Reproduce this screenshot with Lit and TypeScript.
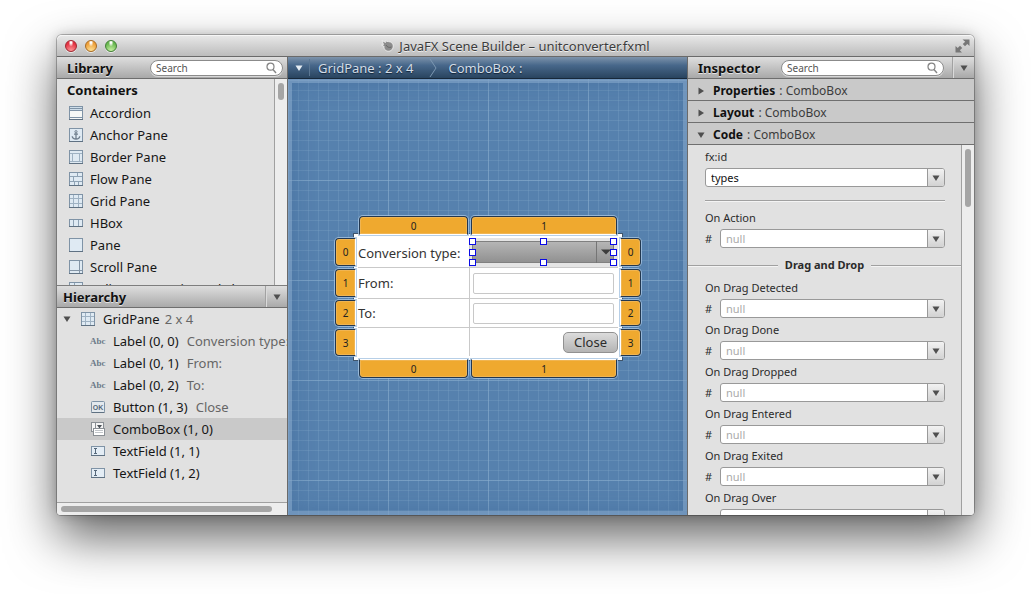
import { LitElement, html, svg, css } from "lit";
import { customElement, property } from "lit/decorators.js";

const frame = svg`<rect x="0.5" y="0.5" width="13" height="13" fill="#dfeaf3" stroke="#7f93a6"/><path d="M0 13.5H14" stroke="#5f7182"/>`;

const glyphs: Record<string, unknown> = {
  accordion: svg`<rect x="0.5" y="0.5" width="13" height="13" fill="#f6f8f6" stroke="#7f93a6"/><rect x="1" y="1" width="12" height="4" fill="#cfdeea"/><path d="M1 2.5H13M1 4.5H13M1 11.5H13" stroke="#7f93a6"/><path d="M0 13.5H14" stroke="#5f7182"/>`,
  anchor: svg`${frame}<circle cx="7" cy="3.7" r="1.1" fill="none" stroke="#71808f"/><path d="M7 5V11.2M5 6.2H9M3.2 8.2C3.4 10 5 11 7 11.2C9 11 10.6 10 10.8 8.2" fill="none" stroke="#71808f" stroke-width="1.3"/>`,
  border: svg`${frame}<path d="M1 3.5H13M1 11.5H13M3.5 3.5V11.5M10.5 3.5V11.5" stroke="#9fb2c3"/>`,
  flow: svg`${frame}<path d="M1 4.5H13M1 9.5H13M8.5 1V4.5M4.5 4.5V9.5M9.5 9.5V13M5.5 9.5V13" stroke="#8fa3b5"/>`,
  grid: svg`${frame}<path d="M1 4.5H13M1 9.5H13M4.5 1V13M9.5 1V13" stroke="#9fb2c3"/>`,
  hbox: svg`<rect x="0.5" y="3.5" width="13" height="7" fill="#dfeaf3" stroke="#7f93a6"/><path d="M0 10.5H14" stroke="#5f7182"/><path d="M4.5 4V10M9.5 4V10" stroke="#8fa3b5"/>`,
  pane: frame,
  scroll: svg`${frame}<path d="M10.5 1V13M1 10.5H13" stroke="#8495a6"/>`,
  split: svg`${frame}<path d="M5.5 1V13M1 4.5H13" stroke="#8fa3b5"/>`,
  label: svg`<text x="-1" y="10" font-family="Liberation Serif, serif" font-size="9" font-weight="bold" fill="#6b7a89">Abc</text>`,
  button: svg`<rect x="0.5" y="1.5" width="13" height="11" rx="1" fill="#e3e9ee" stroke="#7f93a6"/><path d="M0.5 12.5H13.5" stroke="#5f7182"/><text x="7" y="9.7" text-anchor="middle" font-family="Liberation Sans, sans-serif" font-size="7" font-weight="bold" fill="#56687a">OK</text>`,
  combo: svg`<rect x="0.5" y="0.5" width="12" height="9" fill="#f4f4f4" stroke="#8a8f94"/><path d="M4.5 1V9" stroke="#8a8f94"/><path d="M6 3H11L8.5 6.5Z" fill="#4c5259"/><rect x="2.5" y="6.5" width="11" height="7" fill="#fff" stroke="#8a8f94"/><path d="M4 8.5H12M4 10.5H12" stroke="#c2c6ca"/>`,
  field: svg`<rect x="0.5" y="2.5" width="13" height="9" fill="#e4edf5" stroke="#7f93a6"/><path d="M0 11.5H14" stroke="#5f7182"/><path d="M3 4.5H6M3 9.5H6M4.5 4.5V9.5" stroke="#56687a"/>`,
};

const icon = (name: string) =>
  html`<svg class="icon" width="14" height="14" viewBox="0 0 14 14" overflow="visible" aria-hidden="true">${glyphs[name]}</svg>`;

const arrow = (dir: "down" | "right" = "down", color = "#4f4f4f") => html`
  <svg class="arrow" width="8" height="8" viewBox="0 0 8 8" aria-hidden="true">
    <path d=${dir === "down" ? "M0.5 1.5H7.5L4 7Z" : "M1.5 0.5V7.5L7 4Z"} fill=${color} />
  </svg>`;

const base = css`
  * { box-sizing: border-box; }
  button, input, select {
    font: inherit;
    color: inherit;
    margin: 0;
    padding: 0;
    border: 0;
    border-radius: 0;
    background: none;
    outline: none;
    appearance: none;
    min-width: 0;
  }
  ul { list-style: none; margin: 0; padding: 0; }
  svg { display: block; flex: none; }
`;

const header = css`
  .header {
    flex: none;
    display: flex;
    align-items: center;
    height: 22px;
    padding-left: 10px;
    background: linear-gradient(#dedede, #a9a9a9);
    border-bottom: 1px solid #6e6e6e;
  }
  .header h2 {
    flex: 0 0 83px;
    margin: 0;
    font-size: 13px;
    line-height: 18px;
    color: #111;
    text-shadow: 0 1px 0 #e4e4e4;
  }
  .menu {
    flex: none;
    display: grid;
    place-items: center;
    width: 22px;
    height: 100%;
    border-left: 1px solid #a2a2a2;
    box-shadow: inset 1px 0 0 #dadada;
  }
`;

const scroll = css`
  .vbar, .hbar {
    flex: none;
    display: flex;
    background: #ededed;
  }
  .vbar { width: 13px; padding: 4px 3px; border-left: 1px solid #a0a0a0; }
  .hbar { height: 13px; padding: 3px 4px; border-top: 1px solid #a0a0a0; }
  .thumb { border-radius: 3px; background: #a5a5a5; }
`;

@customElement("search-box")
class SearchBox extends LitElement {
  @property() label = "";
  static styles = [base, css`
    :host { flex: 1; min-width: 0; }
    .pill {
      display: flex;
      align-items: center;
      height: 16px;
      padding: 0 5px;
      border: 1px solid #8b8b8b;
      border-radius: 8px;
      background: #fff;
      box-shadow: 0 1px 0 #d8d8d8;
    }
    input { flex: 1; font-size: 10px; line-height: 14px; color: #333; }
    input::placeholder { color: #555; opacity: 1; }
  `];
  render() {
    return html`<div class="pill">
      <input type="text" placeholder="Search" aria-label=${this.label} />
      <svg width="11" height="12" viewBox="0 0 11 12" aria-hidden="true">
        <circle cx="4.5" cy="4.7" r="3.5" fill="none" stroke="#858585" stroke-width="1.2" />
        <path d="M7 7.5L10 11" stroke="#858585" stroke-width="1.4" />
      </svg>
    </div>`;
  }
}

@customElement("side-panel")
class SidePanel extends LitElement {
  static styles = [base, header, scroll, css`
    :host { display: flex; flex-direction: column; min-height: 0; background: #e1e1e1; }
    search-box { margin-right: 4px; }
    .library { flex: none; height: 207px; display: flex; border-bottom: 1px solid #7e7e7e; }
    .items { flex: 1; overflow: hidden; }
    .items h3 { margin: 0; padding: 0 0 1px 10px; font-size: 13px; line-height: 22px; color: #111; }
    li { display: flex; align-items: center; height: 22px; white-space: nowrap; color: #161616; }
    .items li { padding-left: 12px; gap: 7px; }
    .vbar .thumb { width: 6px; height: 17px; }
    .header.tree { padding-left: 6px; }
    .tree h2 { flex: 1; }
    .nodes { flex: 1; min-height: 0; overflow: hidden; }
    .nodes li { gap: 8px; padding-left: 34px; }
    .nodes li.root { padding-left: 6px; }
    .root .arrow { margin-right: 2px; }
    .nodes li.selected { background: #c9c9c9; }
    .detail { color: #666; margin-left: 8px; }
    .root .detail { margin-left: 5px; }
    .hbar .thumb { width: 211px; height: 6px; }
  `];
  private library = [
    ["accordion", "Accordion"], ["anchor", "Anchor Pane"], ["border", "Border Pane"],
    ["flow", "Flow Pane"], ["grid", "Grid Pane"], ["hbox", "HBox"], ["pane", "Pane"],
    ["scroll", "Scroll Pane"], ["split", "Split Pane (Horizontal Flow)"],
  ];
  private nodes = [
    ["label", "Label (0, 0)", "Conversion type:"], ["label", "Label (0, 1)", "From:"],
    ["label", "Label (0, 2)", "To:"], ["button", "Button (1, 3)", "Close"],
    ["combo", "ComboBox (1, 0)", ""], ["field", "TextField (1, 1)", ""], ["field", "TextField (1, 2)", ""],
  ];
  render() {
    return html`
      <div class="header"><h2>Library</h2><search-box label="Search library"></search-box></div>
      <div class="library">
        <div class="items">
          <h3>Containers</h3>
          <ul>${this.library.map(([i, n]) => html`<li>${icon(i)}<span>${n}</span></li>`)}</ul>
        </div>
        <div class="vbar"><div class="thumb"></div></div>
      </div>
      <div class="header tree"><h2>Hierarchy</h2><button class="menu" aria-label="Hierarchy menu">${arrow()}</button></div>
      <ul class="nodes">
        <li class="root">${arrow()}${icon("grid")}<span>GridPane<span class="detail">2 x 4</span></span></li>
        ${this.nodes.map(([i, n, d]) => html`<li class=${i === "combo" ? "selected" : ""}>${icon(i)}<span>${n}<span class="detail">${d}</span></span></li>`)}
      </ul>
      <div class="hbar"><div class="thumb"></div></div>`;
  }
}

@customElement("design-canvas")
class DesignCanvas extends LitElement {
  static styles = [base, css`
    :host { display: flex; flex-direction: column; min-width: 0; }
    .crumbs {
      flex: none;
      display: flex;
      align-items: center;
      height: 22px;
      color: #d3dde7;
      background: linear-gradient(#7d93ab, #47678a 40%, #29445f);
      border-bottom: 1px solid #17283a;
      text-shadow: 0 1px 1px #13253a;
      white-space: nowrap;
    }
    .crumbs .menu { width: 22px; height: 17px; display: grid; place-items: center; border-right: 1px solid #5b7793; }
    .crumbs a { color: inherit; text-decoration: none; padding: 0 8px; }
    .chevron { margin: 0 3px 0 8px; }
    .canvas {
      flex: 1;
      min-height: 0;
      padding-left: 1px;
      display: grid;
      place-content: center;
      overflow: hidden;
      box-shadow: inset 0 0 0 4px rgba(135, 169, 204, .6), inset 0 0 24px rgba(50, 90, 140, .4);
      background-color: #5681ae;
      background-image:
        linear-gradient(90deg, rgba(143, 178, 209, .45) 1px, transparent 1px),
        linear-gradient(rgba(143, 178, 209, .45) 1px, transparent 1px),
        linear-gradient(90deg, rgba(143, 178, 209, .22) 1px, transparent 1px),
        linear-gradient(rgba(143, 178, 209, .22) 1px, transparent 1px);
      background-size: 100px 100px, 100px 100px, 10px 10px, 10px 10px;
      background-position: 0 1px;
    }
    .stage {
      display: grid;
      grid-template-columns: 21px 109px 146px 21px;
      grid-template-rows: 19px 28px 28px 26px 27px 19px;
      gap: 3px;
    }
    .sheet {
      grid-area: 1 / 1 / -1 / -1;
      margin: 17px 18px;
      padding: 4px;
      border: 1px solid #40556b;
      background: #fff;
      display: grid;
      grid-template-columns: 112px 1fr;
      grid-template-rows: 30px 31px 29px 1fr;
      color: #333;
    }
    .cell { display: flex; align-items: center; min-width: 0; white-space: nowrap; border-bottom: 1px solid #c9c9c9; }
    .cell.name { border-right: 1px solid #c9c9c9; }
    .cell.last { border-bottom: 0; }
    .cell.value { padding: 0 4px 0 3px; }
    .cell.active { align-items: flex-start; background: #e5e5e5; padding: 3px 4px 0 2px; }
    .cell.end { justify-content: flex-end; padding: 0; }
    .cell input { width: 100%; height: 21px; border: 1px solid #c8c8c8; border-radius: 2px; background: #fff; }
    .close {
      height: 21px;
      padding: 0 10px;
      border: 1px solid #919191;
      border-radius: 5px;
      background: linear-gradient(#dcdcdc, #b4b4b4);
      line-height: 19px;
      color: #2c2c2c;
    }
    .tab {
      display: grid;
      place-items: center;
      font-size: 10px;
      line-height: 12px;
      color: #222;
      background: #efa92f;
      border: 1px solid #22374f;
      border-radius: 4px;
      box-shadow: 0 0 0 1px rgba(165, 195, 225, .8), inset 0 0 0 1px #f0b552;
    }
    .top { border-bottom-color: #fff; border-radius: 4px 4px 0 0; }
    .bottom { border-top-color: #fff; border-radius: 0 0 4px 4px; }
    .left { border-right-color: #fff; border-radius: 4px 0 0 4px; }
    .right { border-left-color: #fff; border-radius: 0 4px 4px 0; }
    .combo { position: relative; flex: 1; display: grid; grid-template-columns: 1fr 18px; height: 22px; box-shadow: inset 0 0 0 1px #808080; background: linear-gradient(#b7b7b7, #8f8f8f); }
    .combo select { grid-area: 1 / 1 / 2 / 3; }
    .combo .drop { grid-area: 1 / 2; display: grid; place-items: center; border-left: 1px solid #757575; pointer-events: none; }
    .handle { position: absolute; width: 7px; height: 7px; border: 1px solid #0a0ae6; background: #fff; margin: -3px; pointer-events: none; }
    .x0 { left: 0; } .x1 { left: 50%; } .x2 { right: 0; }
    .y0 { top: 0; } .y1 { top: 11px; } .y2 { bottom: 0; }
  `];
  render() {
    const tabs: [string, string, string][] = [
      ["top", "1 / 2", "0"], ["top", "1 / 3", "1"], ["bottom", "6 / 2", "0"], ["bottom", "6 / 3", "1"],
      ...[0, 1, 2, 3].flatMap((r) => [["left", `${r + 2} / 1`, `${r}`], ["right", `${r + 2} / 4`, `${r}`]] as [string, string, string][]),
    ];
    const handles = ["x0 y0", "x1 y0", "x2 y0", "x0 y1", "x2 y1", "x0 y2", "x1 y2", "x2 y2"];
    return html`
      <nav class="crumbs" aria-label="Selection path">
        <button class="menu" aria-label="Path menu">${arrow("down", "#e6edf3")}</button>
        <a href="#gridpane">GridPane : 2 x 4</a>
        <svg class="chevron" width="8" height="20" viewBox="0 0 8 20" aria-hidden="true"><path d="M1 1L7 10L1 19" fill="none" stroke="#7d97b2" /></svg>
        <a href="#combobox">ComboBox :</a>
      </nav>
      <div class="canvas">
        <div class="stage">
          <div class="sheet">
            <label class="cell name" for="type">Conversion type:</label>
            <div class="cell active">
              <div class="combo">
                <select id="type"><option></option></select>
                <span class="drop"><svg width="10" height="6" viewBox="0 0 10 6"><path d="M0 0.5H10L5 5.5Z" fill="#3c3c3c" /></svg></span>
                ${handles.map((place) => html`<span class="handle ${place}"></span>`)}
              </div>
            </div>
            <label class="cell name" for="from">From:</label>
            <div class="cell value"><input id="from" type="text" /></div>
            <label class="cell name" for="to">To:</label>
            <div class="cell value"><input id="to" type="text" /></div>
            <div class="cell name last"></div>
            <div class="cell end last"><button class="close">Close</button></div>
          </div>
          ${tabs.map(([side, area, n]) => html`<div class="tab ${side}" style="grid-area:${area}">${n}</div>`)}
        </div>
      </div>`;
  }
}

@customElement("inspector-panel")
class InspectorPanel extends LitElement {
  static styles = [base, header, scroll, css`
    :host { display: flex; flex-direction: column; min-height: 0; background: #e1e1e1; }
    search-box { margin-right: 8px; }
    .section {
      flex: none;
      display: flex;
      align-items: center;
      gap: 8px;
      height: 22px;
      padding: 2px 0 0 9px;
      border-bottom: 1px solid #6f6f6f;
      background: #c9c9c9;
      font-size: 12px;
      text-align: left;
      color: #3c3c3c;
    }
    .section b { color: #111; margin-right: 1px; }
    .body { flex: 1; min-height: 0; display: flex; }
    .vbar .thumb { width: 6px; height: 58px; }
    .form { flex: 1; min-width: 0; overflow: hidden; padding-top: 4px; font-size: 11px; line-height: 16px; color: #2b2b2b; }
    .group { display: grid; gap: 4px; padding: 0 16px 0 17px; }
    .field { display: grid; grid-template-columns: 15px 1fr; row-gap: 3px; align-items: center; }
    .field label, .wide .combo { grid-column: 1 / 3; }
    .combo {
      display: flex;
      height: 19px;
      border: 1px solid #999;
      border-radius: 3px;
      background: #fff;
      overflow: hidden;
    }
    .combo input { flex: 1; padding: 0 5px; line-height: 15px; color: #111; }
    .combo input::placeholder { color: #aaa; opacity: 1; }
    .combo button { width: 17px; display: grid; place-items: center; border-left: 1px solid #999; background: linear-gradient(#f2f2f2, #d2d2d2); }
    hr { margin: 13px 16px 9px 17px; height: 1px; border: 0; background: #a0a0a0; box-shadow: 0 1px 0 #f4f4f4; }
    .title { display: flex; align-items: center; gap: 7px; margin: 8px 0 6px; font-size: 11px; line-height: 18px; }
    .title::before, .title::after { content: ""; flex: 1; height: 1px; background: #a0a0a0; box-shadow: 0 1px 0 #f4f4f4; }
  `];
  private field(label: string, value = "") {
    const id = label.replace(/\W+/g, "-").toLowerCase();
    return html`<div class="field ${value ? "wide" : ""}">
      <label for=${id}>${label}</label>
      ${value ? "" : html`<span>#</span>`}
      <div class="combo">
        <input id=${id} type="text" .value=${value} placeholder="null" />
        <button aria-label="${label} options">${arrow()}</button>
      </div>
    </div>`;
  }
  render() {
    return html`
      <div class="header"><h2>Inspector</h2><search-box label="Search inspector"></search-box><button class="menu" aria-label="Inspector menu">${arrow()}</button></div>
      <button class="section" aria-expanded="false">${arrow("right")}<span><b>Properties</b> : ComboBox</span></button>
      <button class="section" aria-expanded="false">${arrow("right")}<span><b>Layout</b> : ComboBox</span></button>
      <button class="section" aria-expanded="true">${arrow()}<span><b>Code</b> : ComboBox</span></button>
      <div class="body">
        <div class="form">
          <div class="group">${this.field("fx:id", "types")}</div>
          <hr />
          <div class="group">${this.field("On Action")}</div>
          <h3 class="title">Drag and Drop</h3>
          <div class="group">
            ${["Detected", "Done", "Dropped", "Entered", "Exited", "Over"].map((n) => this.field(`On Drag ${n}`))}
          </div>
        </div>
        <div class="vbar"><div class="thumb"></div></div>
      </div>`;
  }
}

@customElement("app-root")
class AppRoot extends LitElement {
  static styles = [base, css`
    :host {
      display: block;
      box-sizing: border-box;
      height: 100vh;
      padding: 35px 57px 79px;
      overflow: hidden;
      background: #fff;
      font: 13px/18px "Noto Sans", "Open Sans", sans-serif;
      color: #222;
    }
    .window {
      display: flex;
      flex-direction: column;
      height: 100%;
      border-radius: 5px 5px 4px 4px;
      box-shadow: 0 0 0 1px rgba(0, 0, 0, .25), 0 0 12px rgba(0, 0, 0, .2), 0 22px 50px rgba(0, 0, 0, .62);
    }
    .bar {
      flex: none;
      display: grid;
      grid-template-columns: 60px 1fr 60px;
      align-items: center;
      height: 22px;
      border-bottom: 1px solid #6a6a6a;
      border-radius: 5px 5px 0 0;
      background: linear-gradient(#e9e9e9, #bcbcbc);
      box-shadow: inset 0 1px 0 #f6f6f6;
    }
    .lights { display: flex; gap: 8px; padding-left: 8px; }
    .light { width: 12px; height: 12px; border: 1px solid; border-radius: 50%; box-shadow: 0 1px 0 rgba(255, 255, 255, .6); }
    .red { border-color: #a02730; background: radial-gradient(ellipse at 50% 15%, #fff 8%, transparent 35%), radial-gradient(circle at 50% 100%, #ff9c9c, #e43242 70%); }
    .amber { border-color: #a86a21; background: radial-gradient(ellipse at 50% 15%, #fff 8%, transparent 35%), radial-gradient(circle at 50% 100%, #ffe59a, #eea03a 70%); }
    .green { border-color: #417f35; background: radial-gradient(ellipse at 50% 15%, #fff 8%, transparent 35%), radial-gradient(circle at 50% 100%, #cdf5a8, #69b850 70%); }
    h1 { display: flex; justify-content: center; align-items: center; gap: 5px; margin: 0; font-size: 13px; font-weight: normal; line-height: 18px; color: #3c3c3c; text-shadow: 0 1px 0 #eee; white-space: nowrap; }
    .full { justify-self: end; margin-right: 4px; }
    .main {
      flex: 1;
      min-height: 0;
      display: grid;
      grid-template-columns: 231px 1fr 287px;
      grid-template-rows: minmax(0, 1fr);
      overflow: hidden;
      border-radius: 0 0 4px 4px;
    }
    side-panel { border-right: 1px solid #6a6a6a; }
    inspector-panel { border-left: 1px solid #6a6a6a; }
  `];
  render() {
    return html`<div class="window">
      <div class="bar">
        <div class="lights">
          <button class="light red" aria-label="Close window"></button>
          <button class="light amber" aria-label="Minimize window"></button>
          <button class="light green" aria-label="Zoom window"></button>
        </div>
        <h1>
          <svg width="13" height="12" viewBox="0 0 13 12" aria-hidden="true">
            <path d="M1 0.5L4.5 2.5L4 0.8C6 2 9 1 11 3C13 5 12.5 9 10 10.5C7.5 12 4.5 11 3.5 9C2.8 8 3 7 3.2 6.5L0.5 5L2.5 4.5Z" fill="#8c8c8c" stroke="#f5f5f5" stroke-width="0.8" />
            <path d="M5 5C6 7 8 8 10.5 7" fill="none" stroke="#686868" />
          </svg>
          JavaFX Scene Builder – unitconverter.fxml
        </h1>
        <button class="full" aria-label="Full screen">
          <svg width="15" height="14" viewBox="0 0 15 14"><path d="M7.5 0.5H14.5V7L12.3 5L10 7.2L7.8 5L10.2 2.8ZM0.5 7L2.7 9L5 6.8L7.2 9L4.8 11.2L7 13.5H0.5Z" fill="#777" /></svg>
        </button>
      </div>
      <div class="main">
        <side-panel></side-panel>
        <design-canvas></design-canvas>
        <inspector-panel></inspector-panel>
      </div>
    </div>`;
  }
}
